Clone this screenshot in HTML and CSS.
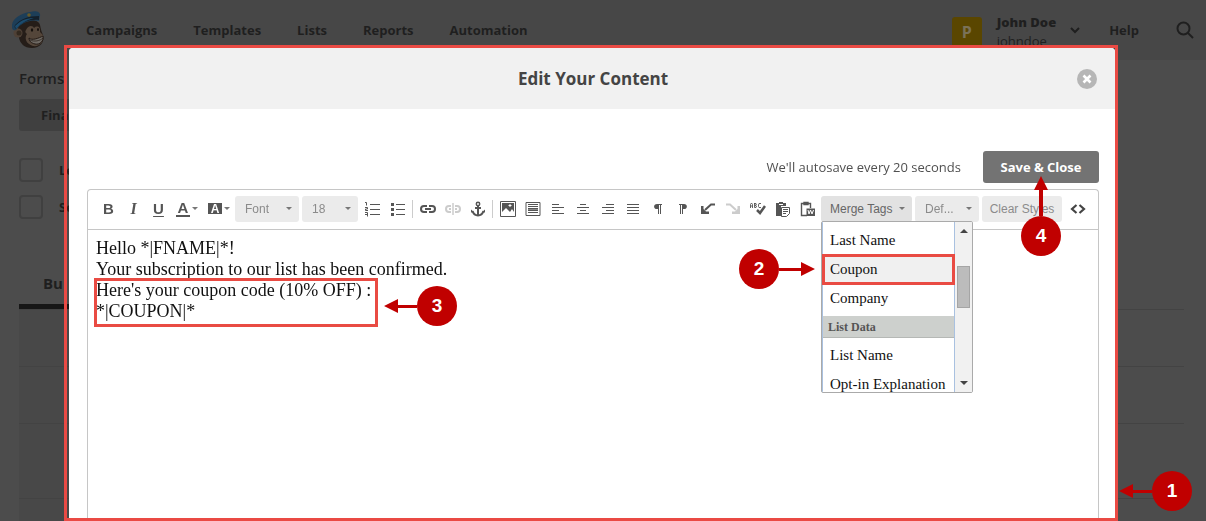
FILE: index.html
```html
<!DOCTYPE html>
<html lang="en">
<head>
<meta charset="utf-8">
<title>Edit Your Content</title>
<link rel="stylesheet" href="styles.css">
</head>
<body>
<header class="topbar">
  <svg class="logo" viewBox="0 0 34 38" aria-label="Home">
    <path d="M6 17C8 8 26 6 28 14C29 18 29 20 31 24C33 31 28 37 20 37C12 37 8 32 7 27Z" fill="#251d18"/>
    <circle cx="6" cy="22" r="4.500" fill="#4f4136"/><circle cx="7" cy="22" r="2.500" fill="#33291f"/>
    <path d="M14 19C16 14 21 14 22 17C25 14 29 16 28 21L31 24C33 31 27 36 21 35C14 33 12 27 15 23C13 22 13 20 14 19Z" fill="#54463a"/>
    <path d="M17 27C20 30 27 27 31 25C32 30 28 34 23 33C19 32 17 30 17 27Z" fill="#6e6963" stroke="#241b16"/>
    <path d="M18 29C22 31 28 30 31 27" fill="none" stroke="#241b16" stroke-width=".7"/>
    <ellipse cx="20" cy="19" rx="1.200" ry="1.700" fill="#17120f"/><ellipse cx="26" cy="18.500" rx="1" ry="1.500" fill="#17120f"/>
    <path d="M0 16C-1 8 9 2 18 1C24-1 29 1 28 5L27 10C18 8 9 12 4 19C1 20 0 18 0 16Z" fill="#1d3e58"/>
    <path d="M3 14C9 8 16 5 27 5L27 9C18 8 10 11 4 18C3 17 2 16 3 14Z" fill="#14202b"/>
    <path d="M3 15C9 9 15 7 22 7C15 9 9 12 4 18Z" fill="#1b4b6d"/>
    <circle cx="17" cy="4" r="1.800" fill="#6a5a25"/>
  </svg>
  <nav class="mainnav">
    <a href="#">Campaigns</a><a href="#">Templates</a><a href="#">Lists</a><a href="#">Reports</a><a href="#">Automation</a>
  </nav>
  <div class="account">
    <span class="avatar">P</span>
    <div class="who"><strong>John Doe</strong><span>johndoe</span></div>
    <svg class="chev" viewBox="0 0 10 8"><path d="M1 2l4 4 4-4" fill="none" stroke="#1f1f1f" stroke-width="2"/></svg>
  </div>
  <a class="help" href="#">Help</a>
  <button class="search" aria-label="Search"><svg viewBox="0 0 18 18"><circle cx="7.500" cy="7.500" r="6" fill="none" stroke="#1f1f1f" stroke-width="2"/><path d="M12 12l5 5" stroke="#1f1f1f" stroke-width="2"/></svg></button>
</header>

<main class="page">
  <h2 class="page-title">Forms</h2>
  <button class="page-btn">Fina</button>
  <label class="check"><input type="checkbox"><span>Le</span></label>
  <label class="check"><input type="checkbox"><span>Se</span></label>
  <div class="tabs"><span class="tab">Bu</span></div>
  <div class="rows"><div class="row first"></div><div class="row"></div><div class="row"></div><div class="row tall"></div></div>
</main>

<div class="frame">
  <section class="modal" role="dialog" aria-labelledby="dlg-title">
    <header class="modal-head">
      <h1 id="dlg-title">Edit Your Content</h1>
      <button class="close" aria-label="Close"><svg viewBox="0 0 20 20"><circle cx="10" cy="10" r="10" fill="#b6b6b6"/><path d="M6.500 6.500l7 7M13.500 6.500l-7 7" stroke="#fff" stroke-width="2.600"/></svg></button>
    </header>
    <div class="modal-body">
      <div class="saverow">
        <span class="autosave">We'll autosave every 20 seconds</span>
        <div class="save-wrap">
          <button class="save">Save &amp; Close</button>
          <div class="mark mark-up"><svg class="arrow-up" viewBox="0 0 14 40"><path d="M7 0l7 14H9v26H5V14H0z"/></svg><b>4</b></div>
        </div>
      </div>
      <div class="editor">
        <div class="toolbar" role="toolbar">
          <button class="tool bold">B</button>
          <button class="tool italic">I</button>
          <button class="tool under">U</button>
          <button class="tool wide" aria-label="Text colour"><span class="fore">A</span><svg class="caret" viewBox="0 0 6 3"><path d="M0 0h6L3 3z"/></svg></button>
          <button class="tool wide" aria-label="Highlight colour"><span class="back">A</span><svg class="caret" viewBox="0 0 6 3"><path d="M0 0h6L3 3z"/></svg></button>
          <div class="picker"><select class="w-font" aria-label="Font"><option>Font</option></select><svg class="caret" viewBox="0 0 6 3"><path d="M0 0h6L3 3z"/></svg></div>
          <div class="picker size"><select class="w-size" aria-label="Size"><option>18</option></select><svg class="caret" viewBox="0 0 6 3"><path d="M0 0h6L3 3z"/></svg></div>
          <button class="tool" aria-label="Numbered list"><svg viewBox="0 0 16 16"><path d="M5 3.500h10M5 8.500h10M5 13.500h10M0 1.500h1.500v3M0 6.500h2.500v1.500h-2v1.500h2.500M0 11.500h2.500v4M0 13.500h2" fill="none" stroke="#555"/></svg></button>
          <button class="tool" aria-label="Bulleted list"><svg viewBox="0 0 16 16"><path d="M6 3.500h9M6 8.500h9M6 13.500h9" stroke="#555"/><path d="M1 2h3v3H1zM1 7h3v3H1zM1 12h3v3H1z" fill="#555"/></svg></button>
          <i class="sep"></i>
          <button class="tool" aria-label="Link"><svg viewBox="0 0 16 16"><path d="M7 5H4a3 3 0 0 0 0 6h3M9 5h3a3 3 0 0 1 0 6H9M5 8h6" fill="none" stroke="#555" stroke-width="2"/></svg></button>
          <button class="tool" aria-label="Unlink"><svg viewBox="0 0 16 16"><path d="M6 5H4a3 3 0 0 0 0 6h2M10 5h2a3 3 0 0 1 0 6h-2M4 8h2M10 8h2" fill="none" stroke="#ccc" stroke-width="2"/><path d="M8 2v12" stroke="#ccc" stroke-width="1.500"/></svg></button>
          <button class="tool" aria-label="Anchor"><svg viewBox="0 0 16 16"><circle cx="8" cy="3" r="1.700" fill="none" stroke="#555" stroke-width="1.500"/><path d="M8 5v9M5 7h6M2.500 10c1 3 3 4.500 5.500 4.500s4.500-1.500 5.500-4.500" fill="none" stroke="#555" stroke-width="2"/><path d="M1 8.500l3.500 3H1zM15 8.500l-3.500 3H15z" fill="#555"/></svg></button>
          <i class="sep"></i>
          <button class="tool" aria-label="Image"><svg viewBox="0 0 16 16"><path d="M.5.5h15v15H.5z" fill="none" stroke="#555"/><path d="M2 2h12v9l-2-3-2 3-4-4-4 4z" fill="#555"/><path d="M10 3v3M8.500 4.500h3" stroke="#fff"/></svg></button>
          <button class="tool" aria-label="Block"><svg viewBox="0 0 16 16"><path d="M1 1.500h14v13H1zM3 3.500h10M3 5.500h10M3 7.500h10M3 9.500h10M3 11.500h10" fill="none" stroke="#555"/><path d="M3 8.500h10" stroke="#888"/></svg></button>
          <button class="tool" aria-label="Align left"><svg viewBox="0 0 16 16"><path d="M2 3.500h7M2 6.500h12M2 9.500h7M2 12.500h12" stroke="#555"/></svg></button>
          <button class="tool" aria-label="Align centre"><svg viewBox="0 0 16 16"><path d="M5 3.500h6M2 6.500h12M5 9.500h6M2 12.500h12" stroke="#555"/></svg></button>
          <button class="tool" aria-label="Align right"><svg viewBox="0 0 16 16"><path d="M6 3.500h8M2 6.500h12M6 9.500h8M2 12.500h12" stroke="#555"/></svg></button>
          <button class="tool" aria-label="Justify"><svg viewBox="0 0 16 16"><path d="M2 3.500h12M2 6.500h12M2 9.500h12M2 12.500h12" stroke="#555"/></svg></button>
          <button class="tool" aria-label="Left to right"><svg viewBox="0 0 16 16"><path d="M8 8C3 9 3 3 7 3h5v1h-1v9h-1V4H9v9H8z" fill="#555"/></svg></button>
          <button class="tool" aria-label="Right to left"><svg viewBox="0 0 16 16"><path d="M8 8c5 1 5-5 1-5H4v1h1v9h1V4h1v9h1z" fill="#555"/></svg></button>
          <button class="tool" aria-label="Undo"><svg viewBox="0 0 16 16"><path d="M15 3.500H11L5 9" fill="none" stroke="#555" stroke-width="2"/><path d="M1 5h2.500v3L6 10.500h3V13H1z" fill="#555"/></svg></button>
          <button class="tool" aria-label="Redo"><svg viewBox="0 0 16 16"><path d="M1 3.500h4L11 9" fill="none" stroke="#ccc" stroke-width="2"/><path d="M15 5h-2.500v3L10 10.500H7V13h8z" fill="#ccc"/></svg></button>
          <button class="tool" aria-label="Check spelling"><svg viewBox="0 0 16 16"><path d="M.5 7V3.500L1.500 2l1 1.500V7M.5 5h2M4.500 2v4.500H6L6.500 5 5 4.300 6.500 3.500 6 2.500H4M11 2.500H9L8.500 4v1.500l.5 1h2" fill="none" stroke="#555" stroke-width=".9"/><path d="M7 9l3 3 5-7" fill="none" stroke="#555" stroke-width="2.500"/></svg></button>
          <button class="tool" aria-label="Paste as text"><svg viewBox="0 0 16 16"><path d="M1 2h3V1h4v1h3v3H6v10H1z" fill="#555"/><path d="M4 3.500h4" stroke="#fff"/><path d="M6.500 6.500h8v6l-3 3h-5zM8 8.500h5M8 10.500h5M8 12.500h3" fill="#fff" stroke="#555"/></svg></button>
          <button class="tool" aria-label="Paste from Word"><svg viewBox="0 0 16 16"><path d="M7 14.500H1.500v-12h9V7M4 1.500h4v2H4z" fill="none" stroke="#555" stroke-width="1.400"/><path d="M6.500 7.500H15V15H6.500z" fill="#555"/><path d="M8 9l1 4 1.500-4L12 13l1.500-4" fill="none" stroke="#fff"/></svg></button>
          <div class="merge">
            <button class="merge-btn" aria-expanded="true">Merge Tags<svg class="caret" viewBox="0 0 6 3"><path d="M0 0h6L3 3z"/></svg></button>
            <div class="menu-wrap">
              <div class="menu">
                <div class="menu-list">
                  <button>Last Name</button>
                  <button class="picked">Coupon</button>
                  <button>Company</button>
                  <h3>List Data</h3>
                  <button>List Name</button>
                  <button>Opt-in Explanation</button>
                </div>
                <div class="scroll">
                  <svg viewBox="0 0 8 4"><path d="M0 4l4-4 4 4z"/></svg>
                  <div class="thumb"></div>
                  <svg viewBox="0 0 8 4"><path d="M0 0l4 4 4-4z"/></svg>
                </div>
              </div>
              <div class="mark mark-right"><b>2</b><svg class="arrow-h" viewBox="0 0 36 14"><path d="M36 7L22 14V9H0V6h22V0z"/></svg></div>
            </div>
          </div>
          <div class="picker"><select class="w-def" aria-label="Style"><option>Def...</option></select><svg class="caret" viewBox="0 0 6 3"><path d="M0 0h6L3 3z"/></svg></div>
          <button class="clear">Clear Styles</button>
          <button class="tool source" aria-label="Source"><svg viewBox="0 0 16 16"><path d="M6.500 4L2 8l4.500 4M9.500 4L14 8l-4.500 4" fill="none" stroke="#444" stroke-width="2.200"/></svg></button>
        </div>
        <div class="content" contenteditable="true" spellcheck="false">
          <p>Hello *|FNAME|*!</p>
          <p>Your subscription to our list has been confirmed.</p>
          <div class="coupon">
            <p>Here's your coupon code (10% OFF) :</p>
            <p>*|COUPON|*</p>
            <div class="box"></div>
            <div class="mark mark-left"><svg class="arrow-long" viewBox="0 0 33 14"><path d="M0 7l14-7v6h19v3H14v5z"/></svg><b>3</b></div>
          </div>
        </div>
      </div>
    </div>
  </section>
  <div class="mark mark-frame"><svg class="arrow-long" viewBox="0 0 33 14"><path d="M0 7l14-7v6h19v3H14v5z"/></svg><b>1</b></div>
</div>
</body>
</html>
```

FILE: styles.css
```css
* { box-sizing: border-box; }
body {
  display: flex;
  flex-direction: column;
  margin: 0;
  height: 100vh;
  background: #4c4c4c;
  color: #1f1f1f;
  font: 13px/18px "Open Sans", sans-serif;
}
button { border: 0; padding: 0; margin: 0; background: none; font: inherit; color: inherit; cursor: pointer; }
svg { display: block; }
h1, h2, h3, p { margin: 0; }
a { color: inherit; text-decoration: none; }

/* Dimmed page */
.topbar {
  display: flex;
  flex: none;
  align-items: center;
  height: 60px;
  padding: 0 12px;
  background: #474747;
  font-weight: 700;
}
.logo { width: 34px; height: 38px; }
.mainnav { display: flex; gap: 36px; margin-left: 40px; }
.account { display: flex; align-items: center; margin-left: auto; }
.avatar {
  width: 30px; height: 30px;
  margin: 4px 15px 0 0;
  border-radius: 3px;
  background: #5a4600;
  color: #7a7158;
  font-size: 16px;
  line-height: 30px;
  text-align: center;
}
.who { display: flex; flex-direction: column; margin-top: 4px; line-height: 19px; }
.who span { font-weight: 400; }
.chev { width: 10px; height: 8px; margin: 0 29px 0 14px; }
.search { margin-left: 37px; }
.search svg { width: 18px; height: 18px; }
.page { display: flex; flex-direction: column; flex: 1; min-height: 0; padding: 7px 22px 0 19px; }
.page-title { font-size: 15px; line-height: 22px; font-weight: 600; margin-bottom: 10px; }
.page-btn {
  flex: none;
  width: 140px; height: 32px;
  padding-left: 22px;
  margin-bottom: 27px;
  border-radius: 3px;
  background: #404040;
  font-weight: 700;
  text-align: left;
}
.check { display: flex; flex: none; align-items: center; gap: 16px; height: 24px; margin-bottom: 13px; font-weight: 700; }
.check input { appearance: none; width: 24px; height: 24px; margin: 0; border: 2px solid #404040; border-radius: 4px; }
.tabs {
  flex: none;
  width: 50%;
  height: 41px;
  margin-top: 36px;
  padding: 0 24px;
  border-bottom: 5px solid #161616;
  font-size: 15px;
  font-weight: 700;
  line-height: 30px;
}
.rows { flex: 1; min-height: 0; overflow: hidden; background: linear-gradient(90deg, #484848 50%, #4c4c4c 50%); }
.row { height: 57px; border-bottom: 1px solid #434343; }
.first { height: 1px; }
.tall { height: 75px; }

/* Dialog */
.frame {
  position: fixed;
  inset: 45px 88px 0 64px;
  padding-left: 2px;
  border: 3px solid #ea4a44;
}
.modal { display: flex; flex-direction: column; height: 100%; border-radius: 4px 4px 0 0; background: #fff; }
.modal-head {
  display: flex;
  align-items: center;
  height: 61px;
  padding: 0 18px 0 40px;
  border-radius: 4px 4px 0 0;
  background: #f1f1f1;
}
.modal-head h1 { flex: 1; font-size: 17px; line-height: 24px; text-align: center; color: #444; font-weight: 700; }
.close svg { width: 20px; height: 20px; }
.modal-body { flex: 1; display: flex; flex-direction: column; padding: 42px 16px 0 18px; }
.saverow { display: flex; justify-content: flex-end; align-items: center; gap: 22px; margin-bottom: 6px; }
.autosave { color: #505050; }
.save-wrap { position: relative; }
.save {
  display: block;
  width: 116px; height: 32px;
  border-radius: 3px;
  background: #737373;
  color: #fff;
  font-weight: 700;
}
.editor { flex: 1; display: flex; flex-direction: column; border: 1px solid #c6c6c6; border-bottom: 0; border-radius: 4px 4px 0 0; }

/* Toolbar */
.toolbar {
  display: flex;
  align-items: center;
  height: 40px;
  padding: 0 0 2px 8px;
  border-bottom: 1px solid #c6c6c6;
  font-family: "Liberation Sans", sans-serif;
  font-size: 12px;
  color: #555;
}
.tool { display: flex; align-items: center; justify-content: center; flex: none; width: 25px; height: 26px; }
.tool svg { width: 16px; height: 16px; }
.bold, .under, .fore, .back { font-weight: 700; font-size: 15px; }
.italic { font: italic 700 16px/18px "Liberation Serif", serif; }
.under { text-decoration: underline; text-underline-offset: 2px; }
.wide { width: 32px; gap: 2px; }
.fore { width: 14px; line-height: 14px; border-bottom: 2px solid #555; }
.back { width: 14px; height: 11px; line-height: 12px; background: #555; color: #fff; font-size: 12px; }
.caret, .wide .caret { width: 6px; height: 3px; fill: #777; }
.picker { display: grid; flex: none; align-items: center; margin-right: 3px; }
.picker > * { grid-area: 1 / 1; }
.picker .caret { justify-self: end; margin-right: 7px; pointer-events: none; }
.picker select {
  appearance: none;
  height: 26px;
  padding: 0 10px;
  border: 0;
  border-radius: 3px;
  background: #ebebeb;
  color: #8b8b8b;
  font: inherit;
}
.size { margin-right: 2px; }
.picker .w-font, .picker .w-def { width: 64px; }
.picker .w-size { width: 56px; }
.sep { flex: none; width: 1px; height: 18px; margin: 0 2px; background: #ccc; }
.merge { position: relative; flex: none; margin: 0 3px 0 1px; }
.merge-btn {
  display: flex;
  align-items: center;
  justify-content: space-between;
  width: 91px; height: 26px;
  padding: 0 7px 0 9px;
  border-radius: 3px;
  background: #e2e2e2;
  color: #666;
}
.clear { flex: none; width: 80px; height: 26px; border-radius: 3px; background: #ebebeb; color: #8b8b8b; }
.source { margin-left: 3px; }

/* Merge tag menu */
.menu-wrap { position: absolute; top: 25px; left: 0; z-index: 2; }
.menu {
  display: flex;
  width: 152px; height: 172px;
  border: 1px solid #aaa;
  border-radius: 2px;
  background: #fff;
  overflow: hidden;
}
.menu-list {
  display: flex;
  flex-direction: column;
  flex: 1;
  padding-top: 4px;
  border: solid #a9c1e0;
  border-width: 0 1px;
  color: #111;
  font-family: "Liberation Serif", serif;
}
.menu-list button { flex: none; height: 29px; padding-left: 7px; font-size: 15px; text-align: left; white-space: nowrap; }
.menu-list .picked { background: #f0f0f0; outline: 3px solid #e94b43; outline-offset: -2px; }
.menu-list h3 { flex: none; margin: 3px 0; height: 22px; padding-left: 5px; border-bottom: 1px solid #b5b8b5; background: #cdd0cd; color: #555; font-size: 12px; line-height: 22px; }
.scroll { display: flex; flex-direction: column; align-items: center; justify-content: space-between; width: 17px; padding: 7px 0; background: #f1f1f1; }
.scroll svg { width: 8px; height: 4px; fill: #444; }
.thumb { width: 13px; height: 42px; margin-bottom: 40px; border: 1px solid #a5a5a5; background: #bcbcbc; }

/* Edited text */
.content { padding: 8px; color: #111; font: 18px/21px "Liberation Serif", serif; outline: 0; }
.coupon { position: relative; width: 278px; white-space: nowrap; }
.box { position: absolute; inset: -2px -4px -5px -2px; border: 3px solid #e94b43; }

/* Numbered callouts */
.mark { position: absolute; display: flex; align-items: center; z-index: 3; pointer-events: none; }
.mark b {
  width: 40px; height: 40px;
  border-radius: 50%;
  background: #c00000;
  color: #fff;
  font: 700 19px/40px "Liberation Sans", sans-serif;
  text-align: center;
}
.mark svg { fill: #c00000; }
.arrow-h { width: 36px; height: 14px; }
.arrow-long { width: 33px; height: 14px; }
.arrow-up { width: 14px; height: 40px; }
.mark-up { flex-direction: column; top: 25px; left: 38px; }
.mark-right { top: 28px; right: 100%; margin-right: 6px; }
.mark-left { top: 6px; left: 100%; margin-left: 10px; }
.mark-frame { bottom: 7px; left: 100%; margin-left: 4px; }
```
